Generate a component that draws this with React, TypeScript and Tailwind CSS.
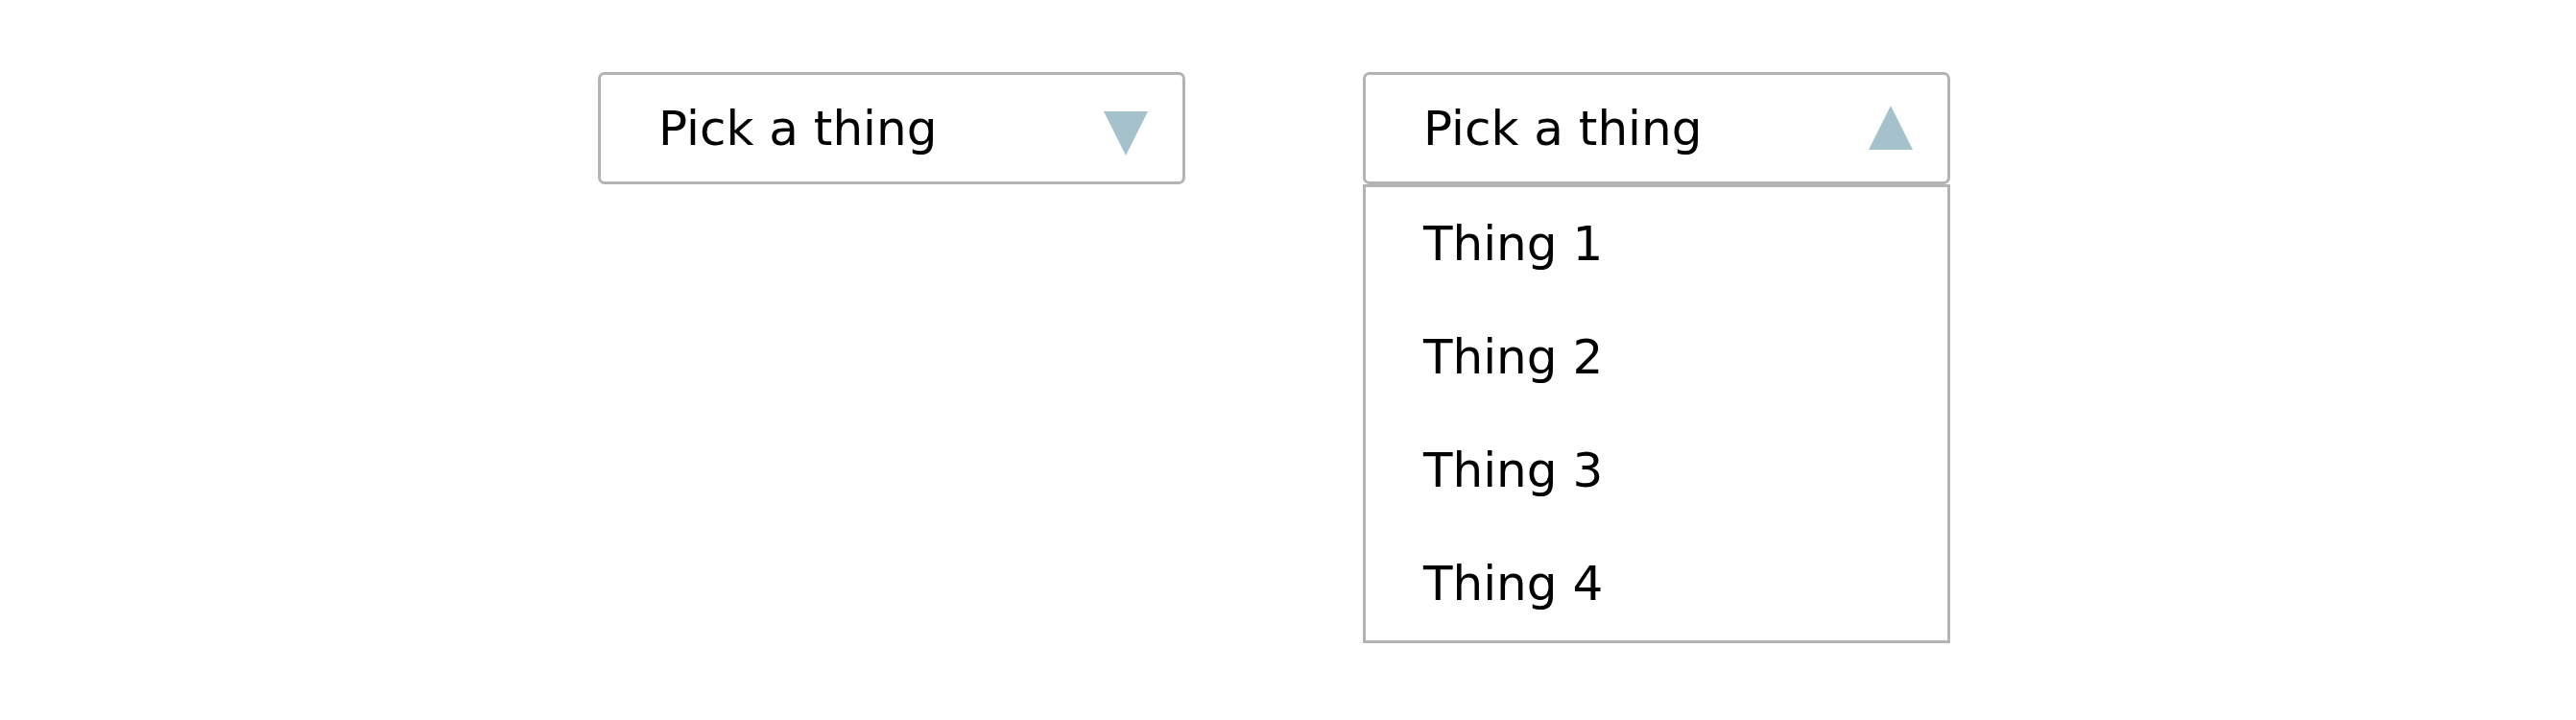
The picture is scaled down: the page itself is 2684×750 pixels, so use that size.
import React from 'react';

const items = ['Thing 1', 'Thing 2', 'Thing 3', 'Thing 4'];

function Arrow({ up }: { up: boolean }) {
  return (
    <svg width="46" height="46" viewBox="0 0 46 46" className={up ? 'mt-[-1px]' : 'mt-[10px]'}>
      {up ? <polygon points="23,0 46,46 0,46" fill="#a4c1cc" /> : <polygon points="0,0 46,0 23,46" fill="#a4c1cc" />}
    </svg>
  );
}

function Select({ open }: { open: boolean }) {
  return (
    <div className="w-[612px] flex flex-col">
      <div className="h-[117px] border-[3px] border-[#b3b3b3] rounded-[7px] bg-white flex items-center justify-between pl-[60px] pr-[36px]">
        <span className="pt-[1px]">Pick a thing</span>
        <Arrow up={open} />
      </div>
      {open && (
        <div className="border-[3px] border-[#b3b3b3] bg-white flex flex-col">
          {items.map((it) => (
            <div key={it} className="h-[118px] flex items-center pl-[60px]">
              {it}
            </div>
          ))}
        </div>
      )}
    </div>
  );
}

export default function App() {
  return (
    <div
      className="min-h-screen bg-white flex items-start gap-[185px] pl-[623px] pt-[75px] text-black text-[50px]"
      style={{ fontFamily: '"DejaVu Sans", Verdana, sans-serif' }}
    >
      <Select open={false} />
      <Select open={true} />
    </div>
  );
}
